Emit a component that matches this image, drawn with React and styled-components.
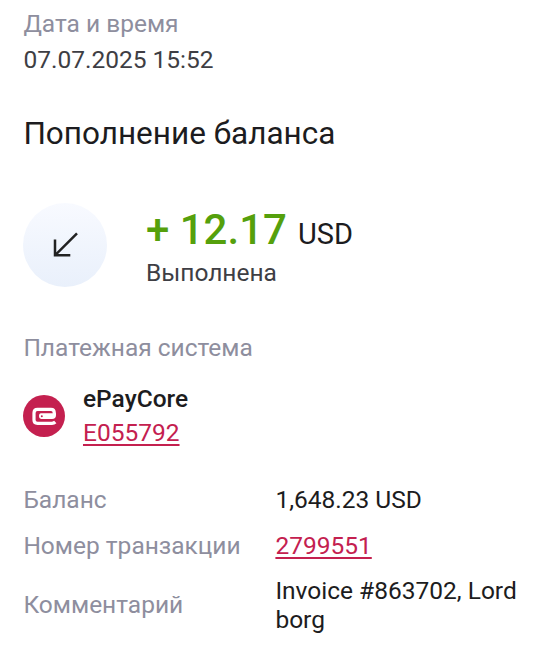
import React from "react";
import styled, { createGlobalStyle } from "styled-components";

const Global = createGlobalStyle`
  * { box-sizing: border-box; }
  body { margin: 0; background: #fff; font-family: Roboto, sans-serif; }
`;

const Page = styled.main`
  width: 541px;
  height: 667px;
  padding: 9px 16px 0 23.4px;
  color: #1c1c20;
  font-size: 24.5px;
  line-height: 29px;
  overflow: hidden;
`;
const Label = styled.div`
  color: #8e8e9e;
`;
const DateValue = styled.div`
  margin-top: 7px;
  color: #3e3e44;
`;
const Title = styled.h1`
  margin: 40px 0 0;
  font-size: 31.5px;
  line-height: 40px;
  font-weight: 400;
`;
const Summary = styled.section`
  display: flex;
  margin-top: 49px;
  height: 84px;
`;
const Disc = styled.div`
  width: 84px;
  height: 84px;
  border-radius: 50%;
  background: linear-gradient(#f8faff, #e9f0fb);
`;
const SummaryText = styled.div`
  margin-left: 38.6px;
`;
const Amount = styled.div`
  display: flex;
  align-items: baseline;
  height: 55px;
  line-height: 54px;
  font-size: 42px;
  font-weight: 500;
  color: #55a00c;
`;
const Currency = styled.span`
  margin-left: 11px;
  font-size: 29px;
  font-weight: 400;
  color: #1c1c20;
`;
const Status = styled.div`
  color: #3e3e44;
`;
const System = styled.section`
  margin-top: 46px;
`;
const SystemRow = styled.div`
  display: flex;
  align-items: center;
  margin-top: 22px;
  gap: 17.6px;
`;
const SystemName = styled.div`
  font-weight: 500;
  margin-bottom: 5px;
`;
const Link = styled.a`
  color: #c4204f;
  text-decoration: underline;
  text-decoration-thickness: 2px;
  text-underline-offset: 3px;
  text-decoration-skip-ink: none;
`;
const Details = styled.dl`
  display: grid;
  grid-template-columns: 252px 1fr;
  align-items: center;
  row-gap: 16.5px;
  margin: 38px 0 0;
`;
const Term = styled.dt`
  color: #8e8e9e;
  padding-bottom: ${(p) => (p.$multiline ? 2 : 0)}px;
`;
const Value = styled.dd`
  margin: 0;
`;

export default function App() {
  return (
    <>
      <Global />
      <Page>
        <Label>Дата и время</Label>
        <DateValue>07.07.2025 15:52</DateValue>
        <Title>Пополнение баланса</Title>
        <Summary>
          <Disc>
            <svg width="84" height="84" viewBox="0 0 84 84" fill="none" stroke="#222" strokeWidth="2.500">
              <path d="M54 30.300 32 52.300M32 36.500V52.300H47.300" />
            </svg>
          </Disc>
          <SummaryText>
            <Amount>+ 12.17<Currency>USD</Currency></Amount>
            <Status>Выполнена</Status>
          </SummaryText>
        </Summary>
        <System>
          <Label>Платежная система</Label>
          <SystemRow>
            <svg width="42" height="42" viewBox="0 0 42 42" fill="none">
              <circle cx="21" cy="21" r="21" fill="#c4204f" />
              <path d="M32.300 27Q31 28.300 29 28.300H14.500Q11 28.300 11 25V18Q11 14.300 14.500 14.300H28Q31.300 14.300 31.300 18V20" stroke="#fff" strokeWidth="3.200" />
              <path d="M18 18.300H33V20Q33 24 29 24H18Q16 24 16 21.300Q16 18.300 18 18.300Z" fill="#fff" />
              <circle cx="18.800" cy="21.300" r="1" fill="#c4204f" />
            </svg>
            <div>
              <SystemName>ePayCore</SystemName>
              <Link>E055792</Link>
            </div>
          </SystemRow>
        </System>
        <Details>
          <Term>Баланс</Term>
          <Value>1,648.23 USD</Value>
          <Term>Номер транзакции</Term>
          <Value><Link>2799551</Link></Value>
          <Term $multiline>Комментарий</Term>
          <Value>Invoice #863702, Lord borg</Value>
        </Details>
      </Page>
    </>
  );
}
